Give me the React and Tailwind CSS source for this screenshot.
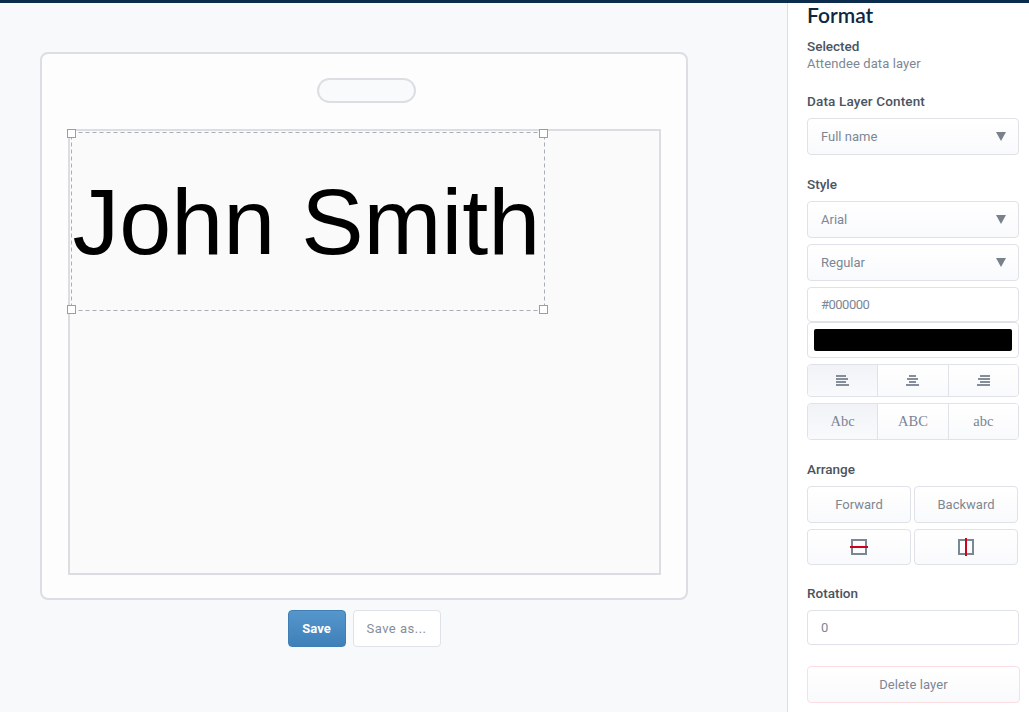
const font = { fontFamily: '"Roboto", "Liberation Sans", sans-serif' };

function Arrow() {
  return (
    <svg width="10" height="9" viewBox="0 0 10 9" className="shrink-0">
      <polygon points="0,0 10,0 5,9" fill="#78818c" />
    </svg>
  );
}

function Select({ label, className = "" }) {
  return (
    <div className={`flex h-[37px] items-center justify-between rounded-[4px] border border-[#dfe2e8] bg-gradient-to-b from-white to-[#f9fafc] pl-[13px] pr-[12px] text-[#7d8794] ${className}`}>
      <span>{label}</span>
      <Arrow />
    </div>
  );
}

function Label({ children, className = "" }) {
  return <div className={`h-[18px] text-[13.5px] leading-[18px] font-medium text-[#4a5460] ${className}`}>{children}</div>;
}

function AlignIcon({ kind }) {
  const rows =
    kind === "left"
      ? [[0, 10], [0, 12], [0, 10], [0, 13]]
      : kind === "center"
        ? [[3, 7], [1, 11], [3, 7], [0, 13]]
        : [[3, 10], [1, 12], [3, 10], [0, 13]];
  return (
    <svg width="13" height="11" viewBox="0 0 13 11" className="-mt-[1px]">
      {rows.map(([x, w], i) => (
        <rect key={i} x={x} y={i * 3} width={w} height="2" fill="#868e99" />
      ))}
    </svg>
  );
}

function Handle({ className }) {
  return <div className={`absolute h-[9px] w-[9px] border border-[#9a9da3] bg-white ${className}`} />;
}

function Btn({ children, className = "" }) {
  return (
    <div className={`flex flex-1 items-center justify-center rounded-[4px] border border-[#dfe2e8] bg-gradient-to-b from-white to-[#f9fafc] text-[#7d8794] ${className}`}>
      {children}
    </div>
  );
}

const serif = { fontFamily: '"Liberation Serif", serif' };

export default function App() {
  return (
    <div style={font} className="flex h-[712px] w-[1029px] overflow-hidden border-t-[3px] border-[#0b2c4d] bg-[#f8f9fb] text-[13px]">
      <main className="w-[787px] shrink-0 pl-[40px] pt-[49px]">
        <div className="flex h-[548px] w-[648px] flex-col items-center rounded-[8px] border-2 border-[#dcdee3] bg-[#fdfdfe]">
          <div className="ml-[4px] mt-[24px] h-[25px] w-[99px] rounded-full border-2 border-[#dcdee3] bg-[#f9fafb]" />
          <div className="relative mt-[26px] h-[446px] w-[593px] border-2 border-[#dcdde2] bg-[#fafafa]">
            <div className="absolute left-[1px] top-[1px] flex h-[179px] w-[474px] items-center pl-[2px]">
              <svg className="absolute inset-0 h-full w-full" viewBox="0 0 474 179">
                <rect x="0.5" y="0.5" width="473" height="178" fill="none" stroke="#a9aeb6" strokeWidth="1" strokeDasharray="4 3" />
              </svg>
              <span style={{ fontFamily: '"Liberation Sans", Arial, sans-serif' }} className="relative text-[93.5px] leading-none whitespace-nowrap text-black">John Smith</span>
              <Handle className="-left-[4px] -top-[3px]" />
              <Handle className="-right-[3px] -top-[3px]" />
              <Handle className="-left-[4px] -bottom-[3px]" />
              <Handle className="-right-[3px] -bottom-[3px]" />
            </div>
          </div>
        </div>
        <div className="mt-[10px] flex w-[648px] justify-center gap-[7px]">
          <div className="flex h-[37px] w-[58px] items-center justify-center rounded-[4px] border border-[#3f7fb5] bg-gradient-to-b from-[#5596cb] to-[#3f80b9] font-bold text-white">Save</div>
          <div className="flex h-[37px] w-[88px] items-center justify-center rounded-[4px] border border-[#dfe2e8] bg-white tracking-[0.5px] text-[#868e99]">Save as...</div>
        </div>
      </main>
      <aside className="w-[242px] shrink-0 border-l border-[#dcdfe5] bg-white pl-[19px] pr-[10px]">
        <div style={{ fontFamily: '"Lato", sans-serif' }} className="-mt-[1px] h-[26px] text-[21px] leading-[26px] font-semibold text-[#10263f]">Format</div>
        <Label className="mt-[9px]">Selected</Label>
        <div className="h-[17px] text-[13px] leading-[17px] tracking-[0.1px] text-[#7d8794]">Attendee data layer</div>
        <Label className="mt-[20px] tracking-[0.15px]">Data Layer Content</Label>
        <Select label="Full name" className="mt-[8px]" />
        <Label className="mt-[20px]">Style</Label>
        <Select label="Arial" className="mt-[8px]" />
        <Select label="Regular" className="mt-[6px]" />
        <div className="mt-[6px] flex h-[35px] items-center rounded-[4px] border border-[#dfe2e8] bg-white pl-[13px] tracking-[-0.5px] text-[#7d8794]">#000000</div>
        <div className="flex h-[36px] items-center rounded-[4px] border border-[#dfe2e8] bg-white px-[6px]">
          <div className="h-[22px] w-full rounded-[2px] bg-black" />
        </div>
        <div className="mt-[6px] flex h-[33px] overflow-hidden rounded-[4px] border border-[#dfe2e8]">
          <div className="flex flex-1 items-center justify-center border-r border-[#dfe2e8] bg-gradient-to-b from-[#f1f3f7] to-[#f9fafc]"><AlignIcon kind="left" /></div>
          <div className="flex flex-1 items-center justify-center border-r border-[#dfe2e8] bg-gradient-to-b from-white to-[#f9fafc]"><AlignIcon kind="center" /></div>
          <div className="flex flex-1 items-center justify-center bg-gradient-to-b from-white to-[#f9fafc]"><AlignIcon kind="right" /></div>
        </div>
        <div style={serif} className="mt-[6px] flex h-[37px] overflow-hidden rounded-[4px] border border-[#dfe2e8] text-[14.5px] text-[#7a8596]">
          <div className="flex flex-1 items-center justify-center border-r border-[#dfe2e8] bg-gradient-to-b from-[#f1f3f7] to-[#f9fafc]">Abc</div>
          <div className="flex flex-1 items-center justify-center border-r border-[#dfe2e8] bg-gradient-to-b from-white to-[#f9fafc]">ABC</div>
          <div className="flex flex-1 items-center justify-center bg-gradient-to-b from-white to-[#f9fafc]">abc</div>
        </div>
        <Label className="mt-[20px]">Arrange</Label>
        <div className="mt-[8px] mr-[1px] flex h-[37px] gap-[3px]">
          <Btn>Forward</Btn>
          <Btn>Backward</Btn>
        </div>
        <div className="mt-[6px] mr-[1px] flex h-[36px] gap-[3px]">
          <Btn>
            <svg width="18" height="16" viewBox="0 0 18 16">
              <rect x="2" y="1" width="14" height="14" fill="none" stroke="#7a8794" strokeWidth="2" />
              <rect x="0" y="7" width="18" height="2" fill="#d0021b" />
            </svg>
          </Btn>
          <Btn>
            <svg width="16" height="18" viewBox="0 0 16 18">
              <rect x="1" y="2" width="14" height="14" fill="none" stroke="#7a8794" strokeWidth="2" />
              <rect x="7" y="0" width="2" height="18" fill="#d0021b" />
            </svg>
          </Btn>
        </div>
        <Label className="mt-[19px]">Rotation</Label>
        <div className="mt-[8px] flex h-[35px] items-center rounded-[4px] border border-[#dfe2e8] bg-white pl-[13px] text-[#7d8794]">0</div>
        <div className="mt-[21px] flex h-[37px] w-[213px] items-center justify-center rounded-[4px] border border-[#fbdde2] bg-gradient-to-b from-white to-[#f9fafc] tracking-[0.1px] text-[#7d8794]">Delete layer</div>
      </aside>
    </div>
  );
}
